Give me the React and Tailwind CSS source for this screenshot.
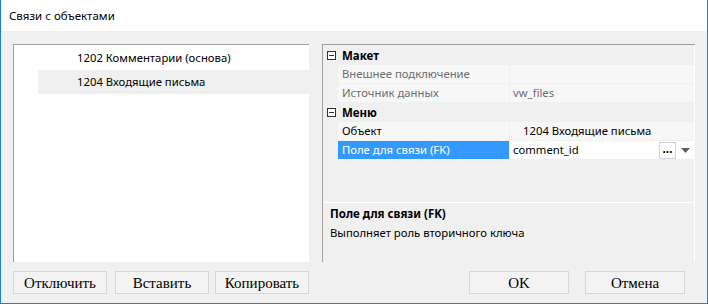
import React from 'react';

const ui = "font-['Segoe_UI','Noto_Sans',sans-serif]";
const serif = "font-['Liberation_Serif','Times_New_Roman',serif]";

const Collapse = () => (
  <svg width="9" height="9" viewBox="0 0 9 9" className="shrink-0">
    <rect x="0.5" y="0.5" width="8" height="8" fill="white" stroke="#333" />
    <line x1="2" y1="4.5" x2="7" y2="4.5" stroke="#333" />
  </svg>
);

const Category = ({ title }) => (
  <div className="flex h-[19px] items-center bg-[#f0f0f0]">
    <div className="flex w-[15px] justify-center pl-[1px]"><Collapse /></div>
    <span className="pl-[4px] text-[11.5px] font-bold text-[#000]">{title}</span>
  </div>
);

const Prop = ({ label, value, disabled, selected, indent, children }) => (
  <div className="flex h-[19px] border-b border-[#f0f0f0]">
    <div className="w-[15px] bg-[#f0f0f0]" />
    <div className={`flex w-[172px] items-center border-r border-[#f0f0f0] pl-[4px] ${selected ? 'bg-[#3399ff] text-white' : 'bg-[#f7f7f7]'} ${disabled ? 'text-[#6d6d6d]' : ''}`}>
      {label}
    </div>
    <div className={`flex flex-1 items-center ${selected ? 'bg-white' : 'bg-[#f7f7f7]'} ${disabled ? 'text-[#6d6d6d]' : 'text-black'} ${indent ? 'pl-[13px]' : 'pl-[3px]'}`}>
      <span className="flex-1">{value}</span>
      {children}
    </div>
  </div>
);

const Button = ({ children, className = '' }) => (
  <button className={`h-[23px] border border-[#d6d6dc] bg-[#f3f3f3] pt-[1px] text-[15px] leading-none text-black ${serif} ${className}`}>
    {children}
  </button>
);

export default function App() {
  return (
    <div className={`flex h-[304px] w-[708px] flex-col border-x border-b border-[#1883d7] bg-[#f0f0f0] text-[11.3px] ${ui}`}>
      <div className="flex h-[31px] items-center bg-white pl-[8px] text-[11.5px] text-black">Связи с объектами</div>

      <div className="flex flex-1 flex-col px-[12px] pt-[13px]">
        <div className="flex h-[218px] gap-[13px]">
          {/* list */}
          <div className="w-[296px] border-l border-t border-[#a0a0a0] bg-white pt-[1px] text-black">
            <div className="flex h-[24px] items-center pl-[63px]">1202 Комментарии (основа)</div>
            <div className="ml-[24px] flex h-[24px] items-center bg-[#f0f0f0] pl-[39px]">1204 Входящие письма</div>
          </div>

          {/* property grid */}
          <div className="flex flex-1 flex-col border-l border-t border-[#a0a0a0] bg-[#f0f0f0]">
            <div className="flex-1 border-r border-white pt-[1px]">
              <Category title="Макет" />
              <Prop label="Внешнее подключение" value="" disabled />
              <Prop label="Источник данных" value="vw_files" disabled />
              <Category title="Меню" />
              <Prop label="Объект" value="1204 Входящие письма" indent />
              <Prop label="Поле для связи (FK)" value="comment_id" selected>
                <div className="flex h-[17px] w-[17px] items-end justify-center border border-[#d0d0dc] bg-white pb-[3px] text-[12px] font-bold leading-none">...</div>
                <div className="flex w-[18px] justify-center">
                  <svg width="9" height="5" viewBox="0 0 9 5"><path d="M0 0h9L4.5 5z" fill="#606060" /></svg>
                </div>
              </Prop>
            </div>
            <div className="h-[60px] border-t border-r border-white pl-[7px] pt-[1px] text-black">
              <div className="h-[19px] text-[11.5px] font-bold leading-[19px]">Поле для связи (FK)</div>
              <div className="h-[19px] leading-[19px]">Выполняет роль вторичного ключа</div>
            </div>
          </div>
        </div>

        <div className="mt-[9px] flex items-start">
          <Button className="w-[94px]">Отключить</Button>
          <Button className="ml-[8px] w-[94px]">Вставить</Button>
          <Button className="ml-[6px] w-[94px]">Копировать</Button>
          <Button className="ml-[160px] w-[100px]">OK</Button>
          <Button className="ml-[16px] w-[100px]">Отмена</Button>
        </div>
      </div>
    </div>
  );
}
